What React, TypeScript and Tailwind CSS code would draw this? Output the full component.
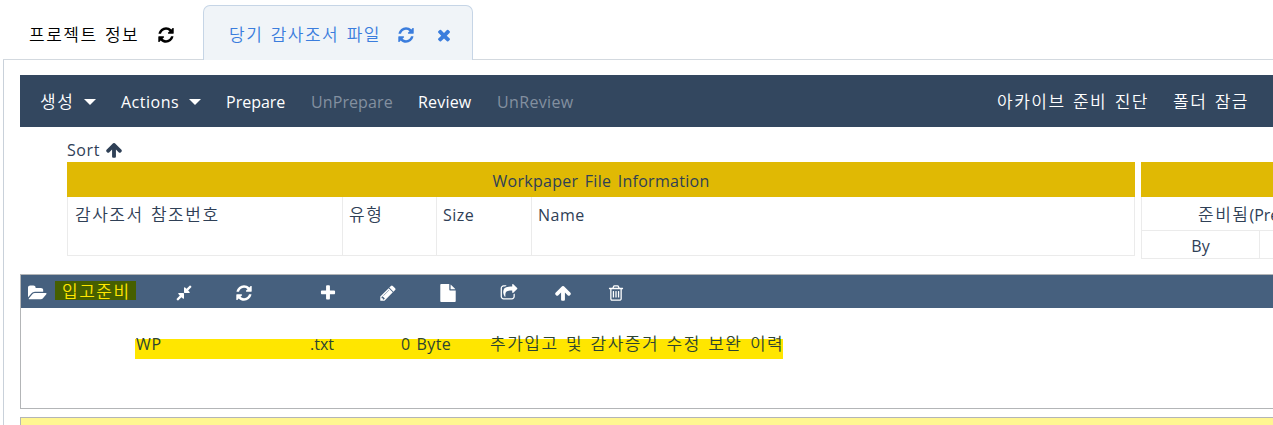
import type { ReactNode } from "react";

const ICONS = {
  refresh:
    "M1639 1056q0 5-1 7-64 268-268 434.5t-478 166.5q-146 0-282.5-55t-243.5-157l-129 129q-19 19-45 19t-45-19-19-45v-448q0-26 19-45t45-19h448q26 0 45 19t19 45-19 45l-137 137q71 66 161 102t187 36q134 0 250-65t186-179q11-17 53-117 8-23 30-23h192q13 0 22.5 9.5t9.5 22.5zm25-800v448q0 26-19 45t-45 19h-448q-26 0-45-19t-19-45 19-45l138-138q-148-137-349-137-134 0-250 65t-186 179q-11 17-53 117-8 23-30 23h-199q-13 0-22.5-9.5t-9.5-22.5v-7q65-268 270-434.5t480-166.5q146 0 284 55.5t245 156.5l130-129q19-19 45-19t45 19 19 45z",
  times:
    "M1490 1322q0 40-28 68l-136 136q-28 28-68 28t-68-28l-294-294-294 294q-28 28-68 28t-68-28l-136-136q-28-28-28-68t28-68l294-294-294-294q-28-28-28-68t28-68l136-136q28-28 68-28t68 28l294 294 294-294q28-28 68-28t68 28l136 136q28 28 28 68t-28 68l-294 294 294 294q28 28 28 68z",
  arrowUp:
    "M1675 971q0 51-37 90l-75 75q-38 38-91 38-54 0-90-38l-294-293v704q0 52-37.5 84.5t-90.5 32.5h-128q-53 0-90.5-32.5t-37.5-84.5v-704l-294 293q-36 38-90 38t-90-38l-75-75q-38-38-38-90 0-53 38-91l651-651q35-37 90-37 54 0 91 37l651 651q37 39 37 91z",
  plus:
    "M1600 736v192q0 40-28 68t-68 28h-416v416q0 40-28 68t-68 28h-192q-40 0-68-28t-28-68v-416h-416q-40 0-68-28t-28-68v-192q0-40 28-68t68-28h416v-416q0-40 28-68t68-28h192q40 0 68 28t28 68v416h416q40 0 68 28t28 68z",
  pencil:
    "M491 1536l91-91-235-235-91 91v107h128v128h107zm523-928q0-22-22-22-10 0-17 7l-542 542q-7 7-7 17 0 22 22 22 10 0 17-7l542-542q7-7 7-17zm-54-192l416 416-832 832h-416v-416zm683 96q0 53-37 90l-166 166-416-416 166-165q36-38 90-38 53 0 91 38l235 234q37 39 37 91z",
  file:
    "M1152 512v-472q22 14 36 28l408 408q14 14 28 36h-472zm-128 32q0 40 28 68t68 28h544v1056q0 40-28 68t-68 28h-1344q-40 0-68-28t-28-68v-1600q0-40 28-68t68-28h800v544z",
  folder:
    "M1879 952q0 31-31 66l-336 396q-43 51-120.5 86.5t-143.5 35.5h-1088q-34 0-60.5-13t-26.5-43q0-31 31-66l336-396q43-51 120.5-86.5t143.5-35.5h1088q34 0 60.5 13t26.5 43zm-343-344v160h-832q-94 0-197 47.5t-164 119.5l-337 396-5 6q0-4-.5-12.5t-.5-12.5v-960q0-92 66-158t158-66h320q92 0 158 66t66 158v32h544q92 0 158 66t66 158z",
  share:
    "M1472 989v259q0 119-84.5 203.5t-203.5 84.5h-832q-119 0-203.5-84.5t-84.5-203.5v-832q0-119 84.5-203.5t203.5-84.5h255q13 0 22.5 9.5t9.5 22.5q0 27-26 32-77 26-133 60-10 4-16 4h-112q-66 0-113 47t-47 113v832q0 66 47 113t113 47h832q66 0 113-47t47-113v-214q0-19 18-29 28-13 54-37 16-16 35-8 21 9 21 29zm237-496l-384 384q-18 19-45 19-12 0-25-5-39-17-39-59v-192h-160q-323 0-438 131-119 137-74 473 3 23-20 34-8 2-12 2-16 0-26-13-10-14-21-31t-39.5-68.5-49.5-99.5-38.5-114-17.5-122q0-49 3.5-91t14-90 28-88 47-81.5 68.5-74 94.5-61.5 124.5-48.5 159.5-30.5 196.5-11h160v-192q0-42 39-59 13-5 25-5 26 0 45 19l384 384q19 19 19 45t-19 45z",
  trash:
    "M704 736v576q0 14-9 23t-23 9h-64q-14 0-23-9t-9-23v-576q0-14 9-23t23-9h64q14 0 23 9t9 23zm256 0v576q0 14-9 23t-23 9h-64q-14 0-23-9t-9-23v-576q0-14 9-23t23-9h64q14 0 23 9t9 23zm256 0v576q0 14-9 23t-23 9h-64q-14 0-23-9t-9-23v-576q0-14 9-23t23-9h64q14 0 23 9t9 23zm128 724v-948h-896v948q0 22 7 40.5t14.5 27 10.5 8.5h832q3 0 10.5-8.5t14.5-27 7-40.5zm-672-1076h448l-48-117q-7-9-17-11h-317q-10 2-17 11zm928 32v64q0 14-9 23t-23 9h-96v948q0 83-47 143.5t-113 60.5h-832q-66 0-113-58.5t-47-141.5v-952h-96q-14 0-23-9t-9-23v-64q0-14 9-23t23-9h309l70-167q15-37 54-63t79-26h320q40 0 79 26t54 63l70 167h309q14 0 23 9t9 23z",
  compress:
    "M896 960v448q0 26-19 45t-45 19-45-19l-144-144-332 332q-10 10-23 10t-23-10l-114-114q-10-10-10-23t10-23l332-332-144-144q-19-19-19-45t19-45 45-19h448q26 0 45 19t19 45zm755-672q0 13-10 23l-332 332 144 144q19 19 19 45t-19 45-45 19h-448q-26 0-45-19t-19-45v-448q0-26 19-45t45-19 45 19l144 144 332-332q10-10 23-10t23 10l114 114q10 10 10 23z",
};

function Icon({ name, className = "" }: { name: keyof typeof ICONS; className?: string }) {
  const box = name === "folder" ? "0 0 1920 1792" : "0 0 1792 1792";
  return (
    <svg viewBox={box} fill="currentColor" className={`h-[18px] shrink-0 ${name === "folder" ? "w-[19px]" : "w-[18px]"} ${className}`}>
      <path d={ICONS[name]} />
    </svg>
  );
}

function Caret({ className = "" }: { className?: string }) {
  return (
    <svg viewBox="0 0 12 6" fill="currentColor" className={`h-[6px] w-[12px] shrink-0 ${className}`}>
      <path d="M0 0h12L6 6z" />
    </svg>
  );
}

function Cell({ className, children }: { className: string; children?: ReactNode }) {
  return <div className={`shrink-0 whitespace-nowrap ${className}`}>{children}</div>;
}

function Ko({ children }: { children: ReactNode }) {
  return <span className="text-[17px] font-[350] tracking-[1.5px] [word-spacing:1.5px]">{children}</span>;
}

export default function App() {
  return (
    <div className="flex h-[425px] w-[1273px] flex-col overflow-hidden bg-white pl-[3px] font-['Open_Sans','Noto_Sans_CJK_KR',sans-serif] text-[16px] leading-[24px] text-[#2f4056]">
      <nav className="flex h-[60px] shrink-0 items-end">
        <div className="flex h-[55px] w-[200px] items-center border-b border-[#d3d9df] pl-[26px] pt-[5px] text-black">
          <Cell className="w-[128px]"><Ko>프로젝트 정보</Ko></Cell>
          <Icon name="refresh" />
        </div>
        <div className="flex h-[55px] w-[270px] items-center rounded-t-[7px] border border-b-0 border-[#c6d5e6] bg-[#f0f4f8] pl-[25px] pt-[4px] text-[#3b7ddd]">
          <Cell className="w-[168px]"><Ko>당기 감사조서 파일</Ko></Cell>
          <Icon name="refresh" />
          <Icon name="times" className="ml-[20px]" />
        </div>
        <div className="h-[55px] flex-1 border-b border-[#d3d9df]" />
      </nav>

      <main className="flex flex-1 flex-col border-l border-[#c9d1da] pl-[16px] pt-[15px]">
        <header className="flex h-[52px] shrink-0 items-center bg-[#33475f] pl-[20px] pt-[2px] text-white">
          <Cell className="w-[44px]"><Ko>생성</Ko></Cell>
          <Caret />
          <Cell className="ml-[25px] w-[68px] tracking-[0.5px]">Actions</Cell>
          <Caret />
          <Cell className="ml-[25px] w-[85px]">Prepare</Cell>
          <Cell className="w-[107px] tracking-[0.1px] text-[#8390a0]">UnPrepare</Cell>
          <Cell className="w-[79px] tracking-[0.2px]">Review</Cell>
          <Cell className="tracking-[0.35px] text-[#8390a0]">UnReview</Cell>
          <Cell className="ml-auto w-[176px]"><Ko>아카이브 준비 진단</Ko></Cell>
          <Cell className="w-[100px]"><Ko>폴더 잠금</Ko></Cell>
        </header>

        <section className="flex h-[147px] shrink-0 flex-col pl-[47px] pt-[11px]">
          <div className="flex h-[24px] shrink-0 items-center">
            <Cell className="w-[38px] tracking-[0.6px]">Sort</Cell>
            <Icon name="arrowUp" />
          </div>
          <div className="flex items-start gap-[6px]">
            <div className="w-[1068px] shrink-0">
              <div className="flex h-[35px] items-center justify-center bg-[#e0b904] pt-[3px] tracking-[0.28px] [word-spacing:2px]">
                <span>Workpaper File Information</span>
              </div>
              <div className="flex h-[59px] border-x border-b border-[#ebebeb]">
                <Cell className="w-[275px] border-r border-[#ebebeb] pl-[7px] pt-[6px]"><Ko>감사조서 참조번호</Ko></Cell>
                <Cell className="w-[94px] border-r border-[#ebebeb] pl-[6px] pt-[6px]"><Ko>유형</Ko></Cell>
                <Cell className="w-[95px] border-r border-[#ebebeb] pl-[6px] pt-[6px] tracking-[0.5px]">Size</Cell>
                <Cell className="pl-[6px] pt-[6px] tracking-[0.5px]">Name</Cell>
              </div>
            </div>
            <div className="w-[240px] shrink-0">
              <div className="h-[35px] bg-[#e0b904]" />
              <div className="h-[34px] whitespace-nowrap border-x border-b border-[#ebebeb] pl-[56px] pt-[6px]">
                <Ko>준비됨</Ko>(Prepared)
              </div>
              <div className="flex h-[28px] border-x border-b border-[#ebebeb]">
                <Cell className="w-[118px] border-r border-[#ebebeb] pt-[3px] text-center">By</Cell>
              </div>
            </div>
          </div>
        </section>

        <section className="h-[135px] shrink-0 border border-r-0 border-[#b3b5b7]">
          <div className="flex h-[33px] items-center bg-[#46607e] pl-[7px] pt-[2px] text-white">
            <Icon name="folder" />
            <div className="ml-[8px] flex h-[19px] w-[81px] -translate-y-[2px] items-center bg-[#465f00] pl-[7px] pt-[3px] text-[#ffe600]">
              <Ko>입고준비</Ko>
            </div>
            <Icon name="compress" className="ml-[39px]" />
            <Icon name="refresh" className="ml-[42px]" />
            <Icon name="plus" className="ml-[66px]" />
            <Icon name="pencil" className="ml-[42px]" />
            <Icon name="file" className="ml-[42px]" />
            <Icon name="share" className="ml-[43px]" />
            <Icon name="arrowUp" className="ml-[36px]" />
            <Icon name="trash" className="ml-[35px]" />
          </div>
          <div className="pl-[114px] pt-[23px]">
            <div className="flex h-[28px] w-[648px] items-center bg-linear-to-b from-transparent from-[8px] to-[#ffe600] to-[8px] pb-[2px] pl-px text-[#2c4432]">
              <Cell className="w-[174px] tracking-[0.8px]">WP</Cell>
              <Cell className="w-[91px]">.txt</Cell>
              <Cell className="w-[89px] tracking-[0.4px] [word-spacing:1.5px]">0 Byte</Cell>
              <Cell className=""><Ko>추가입고 및 감사증거 수정 보완 이력</Ko></Cell>
            </div>
          </div>
        </section>
        <div className="mt-[8px] h-[20px] shrink-0 border border-r-0 border-[#b3b5b7] bg-[#fff691]" />
      </main>
    </div>
  );
}
